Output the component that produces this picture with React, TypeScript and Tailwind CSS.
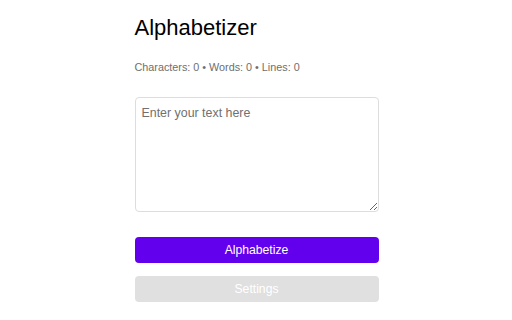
export default function App() {
  return (
    <div className="min-h-[320px] w-full bg-white pl-px font-['Liberation_Sans',Arial,sans-serif]">
      <div className="mx-auto flex w-[244px] flex-col pt-[14px]">
        <h1 className="text-[22px] leading-[28px] text-black">Alphabetizer</h1>
        <p className="mt-[18px] text-[10.8px] leading-[14px] text-[#6e6e6e]">
          Characters: 0 • Words: 0 • Lines: 0
        </p>
        <textarea
          placeholder="Enter your text here"
          className="mt-[23px] h-[115px] w-full rounded-[4px] border border-[#dddddd] px-[6px] py-[7px] text-[12.4px] leading-[16px] text-black outline-none placeholder:text-[#707070]"
        />
        <button className="mt-[25px] h-[26px] w-full rounded-[4px] bg-[#6200ee] text-[12.2px] text-white">
          Alphabetize
        </button>
        <button className="mt-[13px] h-[26px] w-full rounded-[4px] bg-[#e0e0e0] text-[12.2px] text-white">
          Settings
        </button>
      </div>
    </div>
  );
}
